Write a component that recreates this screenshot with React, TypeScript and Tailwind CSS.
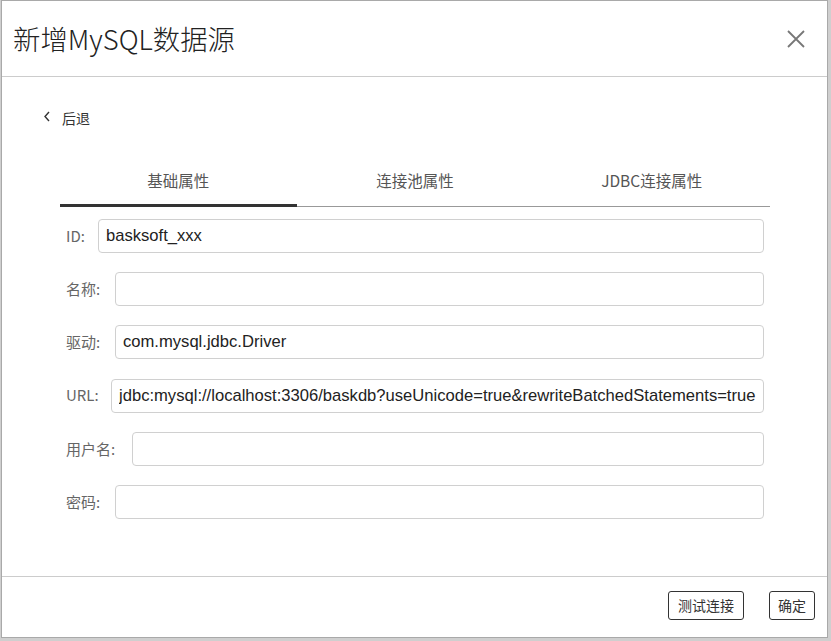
import React, { useState } from 'react';

const fields = [
  { label: 'ID', labelClass: 'w-[32px]', value: 'basksoft_xxx' },
  { label: '名称', labelClass: 'w-[49px]', value: '' },
  { label: '驱动', labelClass: 'w-[49px]', value: 'com.mysql.jdbc.Driver' },
  { label: 'URL', labelClass: 'w-[45px]', value: 'jdbc:mysql://localhost:3306/baskdb?useUnicode=true&rewriteBatchedStatements=true' },
  { label: '用户名', labelClass: 'w-[66px]', value: '' },
  { label: '密码', labelClass: 'w-[49px]', value: '' },
];

const tabs = ['基础属性', '连接池属性', 'JDBC连接属性'];

const cjk = "font-['Noto_Sans_CJK_SC','Noto_Sans',sans-serif]";

const App = () => {
  const [activeTab, setActiveTab] = useState(0);

  return (
    <div className="w-[831px] h-[641px] bg-[#cfcfcf] pl-[2px] pt-[1px] pr-[4px] pb-[4px]">
      <div className={`w-full h-full bg-white flex flex-col shadow-[0_0_0_1px_#a9a9a9] ${cjk}`}>
        {/* 标题栏 */}
        <div className="h-[76px] shrink-0 flex items-center justify-between border-b border-[#cccccc]">
          <h1 className="pl-[11px] text-[27.4px] font-light text-[#222222] leading-none">新增MySQL数据源</h1>
          <button className="mr-[22px] w-[18px] h-[18px]" aria-label="close">
            <svg width="18" height="18" viewBox="0 0 18 18">
              <path d="M1 1 L17 17 M17 1 L1 17" stroke="#777777" strokeWidth="1.8" fill="none" />
            </svg>
          </button>
        </div>

        {/* 内容 */}
        <div className="flex-1 flex flex-col">
          <div className="pt-[31px] pl-[41px] flex items-center h-[51px]">
            <svg width="8" height="11" viewBox="0 0 8 11" className="mr-[11px] -mt-[4px]">
              <path d="M6 1 L2 5.5 L6 10" stroke="#333333" strokeWidth="1.4" fill="none" />
            </svg>
            <span className="text-[14px] leading-[20px] text-[#333333]">后退</span>
          </div>

          <div className="mt-[32px] ml-[58px] mr-[57px] flex border-b border-[#999999]">
            {tabs.map((tab, i) => (
              <div
                key={tab}
                onClick={() => setActiveTab(i)}
                className={
                  i === activeTab
                    ? 'flex-1 text-center pt-[9px] pb-[13px] leading-[22px] text-[15.5px] text-[#555555] border-b-[3px] border-[#333333] -mb-px cursor-pointer'
                    : 'flex-1 text-center pt-[9px] pb-[13px] leading-[22px] text-[15.5px] text-[#555555] border-b-[3px] border-transparent -mb-px cursor-pointer'
                }
              >
                {tab}
              </div>
            ))}
          </div>

          <div className="mt-[12px] ml-[64px] mr-[63px] flex flex-col gap-[19.2px]">
            {fields.map((f) => (
              <div key={f.label} className="flex items-center h-[34px]">
                <label className={`${f.labelClass} shrink-0 text-[15px] text-[#666666]`}>{f.label}:</label>
                <input
                  defaultValue={f.value}
                  className="flex-1 min-w-0 h-[34px] border border-[#d0d0d0] rounded-[4px] pl-[7px] pr-[2px] text-[16.6px] text-[#222222] font-['Liberation_Sans',Arial,sans-serif] outline-none"
                />
              </div>
            ))}
          </div>
        </div>

        {/* 底部按钮 */}
        <div className="h-[61px] shrink-0 border-t border-[#cccccc] flex justify-end items-start pt-[14px] pr-[12px] gap-[25px]">
          <button className="h-[29px] px-[9px] border border-[#333333] rounded-[3px] text-[14px] text-[#333333] bg-white">测试连接</button>
          <button className="h-[29px] px-[8px] border border-[#333333] rounded-[3px] text-[14px] text-[#333333] bg-white">确定</button>
        </div>
      </div>
    </div>
  );
};

export default App;
